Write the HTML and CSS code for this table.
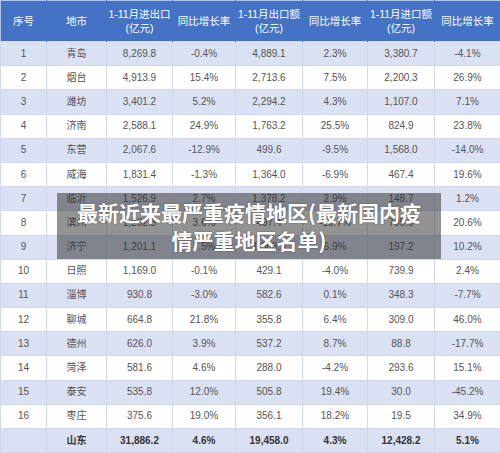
FILE: index.html
```html
<!DOCTYPE html>
<html lang="zh">
<head>
    <meta charset="UTF-8">
    <meta name="viewport" content="width=device-width, initial-scale=1.0">
    <title>最新近来最严重疫情地区</title>
    <link rel="stylesheet" href="styles.css">
</head>
<body>
    <div class="wrap">
        <table>
            <colgroup>
                <col style="width:46px">
                <col style="width:60px">
                <col style="width:66px">
                <col style="width:63px">
                <col style="width:67px">
                <col style="width:65px">
                <col style="width:67px">
                <col style="width:66px">
            </colgroup>
            <thead>
                <tr>
                    <th>序号</th>
                    <th>地市</th>
                    <th>1-11月进出口<br>(亿元)</th>
                    <th>同比增长率</th>
                    <th>1-11月出口额<br>(亿元)</th>
                    <th>同比增长率</th>
                    <th>1-11月进口额<br>(亿元)</th>
                    <th>同比增长率</th>
                </tr>
            </thead>
            <tbody>
                <tr><td>1</td><td>青岛</td><td>8,269.8</td><td>-0.4%</td><td>4,889.1</td><td>2.3%</td><td>3,380.7</td><td>-4.1%</td></tr>
                <tr><td>2</td><td>烟台</td><td>4,913.9</td><td>15.4%</td><td>2,713.6</td><td>7.5%</td><td>2,200.3</td><td>26.9%</td></tr>
                <tr><td>3</td><td>潍坊</td><td>3,401.2</td><td>5.2%</td><td>2,294.2</td><td>4.3%</td><td>1,107.0</td><td>7.1%</td></tr>
                <tr><td>4</td><td>济南</td><td>2,588.1</td><td>24.9%</td><td>1,763.2</td><td>25.5%</td><td>824.9</td><td>23.8%</td></tr>
                <tr><td>5</td><td>东营</td><td>2,067.6</td><td>-12.9%</td><td>499.6</td><td>-9.5%</td><td>1,568.0</td><td>-14.0%</td></tr>
                <tr><td>6</td><td>威海</td><td>1,831.4</td><td>-1.3%</td><td>1,364.0</td><td>-6.9%</td><td>467.4</td><td>19.6%</td></tr>
                <tr><td>7</td><td>临沂</td><td>1,526.9</td><td>2.7%</td><td>1,378.2</td><td>2.9%</td><td>148.7</td><td>1.2%</td></tr>
                <tr><td>8</td><td>滨州</td><td>1,202.5</td><td>3.6%</td><td>497.4</td><td>-13.7%</td><td>705.0</td><td>20.6%</td></tr>
                <tr><td>9</td><td>济宁</td><td>1,201.1</td><td>7.5%</td><td>1,003.9</td><td>6.9%</td><td>197.2</td><td>10.2%</td></tr>
                <tr><td>10</td><td>日照</td><td>1,169.0</td><td>-0.1%</td><td>429.1</td><td>-4.0%</td><td>739.9</td><td>2.4%</td></tr>
                <tr><td>11</td><td>淄博</td><td>930.8</td><td>-3.0%</td><td>582.6</td><td>0.1%</td><td>348.3</td><td>-7.7%</td></tr>
                <tr><td>12</td><td>聊城</td><td>664.8</td><td>21.8%</td><td>355.8</td><td>6.4%</td><td>309.0</td><td>46.0%</td></tr>
                <tr><td>13</td><td>德州</td><td>626.0</td><td>3.9%</td><td>537.2</td><td>8.7%</td><td>88.8</td><td>-17.7%</td></tr>
                <tr><td>14</td><td>菏泽</td><td>581.6</td><td>4.6%</td><td>288.0</td><td>-4.2%</td><td>293.6</td><td>15.1%</td></tr>
                <tr><td>15</td><td>泰安</td><td>535.8</td><td>12.0%</td><td>505.8</td><td>19.4%</td><td>30.0</td><td>-45.2%</td></tr>
                <tr><td>16</td><td>枣庄</td><td>375.6</td><td>19.0%</td><td>356.1</td><td>18.2%</td><td>19.5</td><td>34.9%</td></tr>
                <tr class="total"><td></td><td>山东</td><td>31,886.2</td><td>4.6%</td><td>19,458.0</td><td>4.3%</td><td>12,428.2</td><td>5.1%</td></tr>
            </tbody>
        </table>
        <div class="caption">最新近来最严重疫情地区(最新国内疫情严重地区名单)</div>
    </div>
</body>
</html>
```

FILE: styles.css
```css
body {
    margin: 0;
    padding: 0;
    background: #ffffff;
    font-family: "Liberation Sans", "Noto Sans CJK SC", sans-serif;
}

.wrap {
    position: relative;
    width: 500px;
    height: 453px;
    overflow: hidden;
}

table {
    width: 500px;
    table-layout: fixed;
    border-collapse: collapse;
    border: 1px solid #b4c2e4;
}

th {
    background-color: #4472c4;
    color: #ffffff;
    font-size: 10.5px;
    font-weight: normal;
    line-height: 14px;
    height: 40px;
    padding: 0;
    text-align: center;
    white-space: nowrap;
    border-right: 1px solid #4472c4;
}

td {
    height: 23.2px;
    padding: 0;
    font-size: 10px;
    line-height: 12px;
    color: #555555;
    text-align: center;
    border: 1px solid #cfd8ee;
}

tbody tr:nth-child(odd) td {
    background-color: #dae1f2;
}

tbody tr:nth-child(even) td {
    background-color: #ffffff;
}

tr.total td {
    font-weight: bold;
    color: #333333;
    background-color: #dae1f2;
}

.caption {
    position: absolute;
    left: 57px;
    top: 193px;
    width: 384px;
    height: 66px;
    box-sizing: border-box;
    padding: 5px 17px;
    background: rgba(40, 40, 40, 0.5);
    color: #ffffff;
    font-family: "Noto Sans CJK SC", sans-serif;
    font-weight: bold;
    font-size: 21px;
    line-height: 28px;
    text-align: center;
    text-shadow: 0 0 2px rgba(0, 0, 0, 0.4);
}
```
